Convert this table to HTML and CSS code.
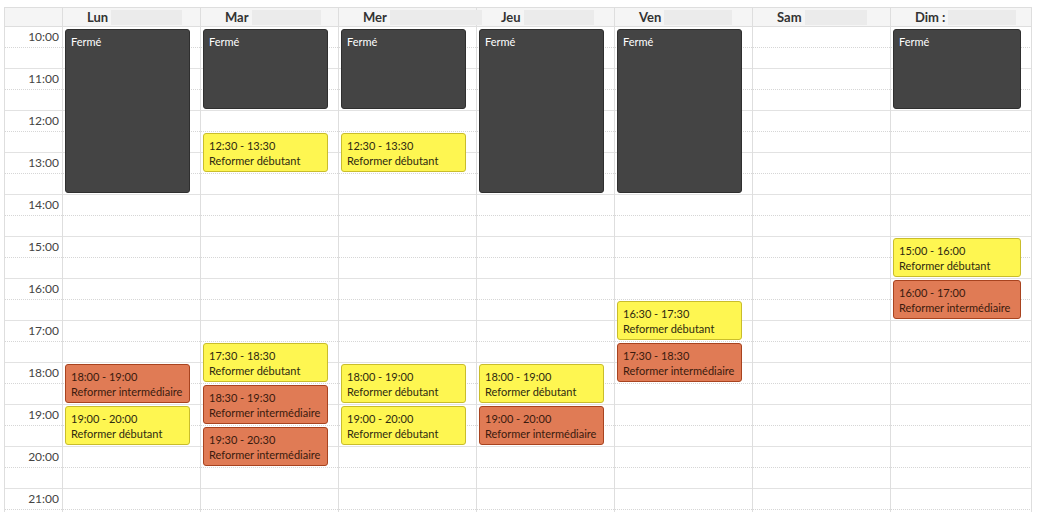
FILE: index.html
```html
<!DOCTYPE html>
<html lang="fr">
<head>
<meta charset="utf-8">
<title>Planning</title>
<link rel="stylesheet" href="styles.css">
</head>
<body>
<div class="cal">
  <div class="head">
    <div class="hcell"></div>
    <div class="hcell"><span class="day">Lun</span><span class="redact w71"></span></div>
    <div class="hcell"><span class="day">Mar</span><span class="redact w69"></span></div>
    <div class="hcell"><span class="day">Mer</span><span class="redact w92"></span></div>
    <div class="hcell"><span class="day">Jeu</span><span class="redact w70"></span></div>
    <div class="hcell"><span class="day">Ven</span><span class="redact w68"></span></div>
    <div class="hcell"><span class="day">Sam</span><span class="redact w62"></span></div>
    <div class="hcell"><span class="day">Dim :</span><span class="redact w68"></span></div>
  </div>
  <div class="body">
    <div class="lines">
      <div class="slot"></div><div class="slot hour"></div>
      <div class="slot"></div><div class="slot hour"></div>
      <div class="slot"></div><div class="slot hour"></div>
      <div class="slot"></div><div class="slot hour"></div>
      <div class="slot"></div><div class="slot hour"></div>
      <div class="slot"></div><div class="slot hour"></div>
      <div class="slot"></div><div class="slot hour"></div>
      <div class="slot"></div><div class="slot hour"></div>
      <div class="slot"></div><div class="slot hour"></div>
      <div class="slot"></div><div class="slot hour"></div>
      <div class="slot"></div><div class="slot hour"></div>
      <div class="slot"></div><div class="slot hour"></div>
    </div>

    <div class="col times">
      <div class="tl">10:00</div><div class="tl">11:00</div><div class="tl">12:00</div>
      <div class="tl">13:00</div><div class="tl">14:00</div><div class="tl">15:00</div>
      <div class="tl">16:00</div><div class="tl">17:00</div><div class="tl">18:00</div>
      <div class="tl">19:00</div><div class="tl">20:00</div><div class="tl">21:00</div>
    </div>

    <div class="col d1">
      <div class="ev closed" style="top:2px;height:164px">Fermé</div>
      <div class="ev inter" style="top:337px;height:39px"><div>18:00 - 19:00</div><div>Reformer intermédiaire</div></div>
      <div class="ev deb" style="top:379px;height:39px"><div>19:00 - 20:00</div><div>Reformer débutant</div></div>
    </div>
    <div class="col d2">
      <div class="ev closed" style="top:2px;height:80px">Fermé</div>
      <div class="ev deb" style="top:106px;height:39px"><div>12:30 - 13:30</div><div>Reformer débutant</div></div>
      <div class="ev deb" style="top:316px;height:39px"><div>17:30 - 18:30</div><div>Reformer débutant</div></div>
      <div class="ev inter" style="top:358px;height:39px"><div>18:30 - 19:30</div><div>Reformer intermédiaire</div></div>
      <div class="ev inter" style="top:400px;height:39px"><div>19:30 - 20:30</div><div>Reformer intermédiaire</div></div>
    </div>
    <div class="col d3">
      <div class="ev closed" style="top:2px;height:80px">Fermé</div>
      <div class="ev deb" style="top:106px;height:39px"><div>12:30 - 13:30</div><div>Reformer débutant</div></div>
      <div class="ev deb" style="top:337px;height:39px"><div>18:00 - 19:00</div><div>Reformer débutant</div></div>
      <div class="ev deb" style="top:379px;height:39px"><div>19:00 - 20:00</div><div>Reformer débutant</div></div>
    </div>
    <div class="col d4">
      <div class="ev closed" style="top:2px;height:164px">Fermé</div>
      <div class="ev deb" style="top:337px;height:39px"><div>18:00 - 19:00</div><div>Reformer débutant</div></div>
      <div class="ev inter" style="top:379px;height:39px"><div>19:00 - 20:00</div><div>Reformer intermédiaire</div></div>
    </div>
    <div class="col d5">
      <div class="ev closed" style="top:2px;height:164px">Fermé</div>
      <div class="ev deb" style="top:274px;height:39px"><div>16:30 - 17:30</div><div>Reformer débutant</div></div>
      <div class="ev inter" style="top:316px;height:39px"><div>17:30 - 18:30</div><div>Reformer intermédiaire</div></div>
    </div>
    <div class="col d6"></div>
    <div class="col d7">
      <div class="ev closed" style="top:2px;height:80px">Fermé</div>
      <div class="ev deb" style="top:211px;height:39px"><div>15:00 - 16:00</div><div>Reformer débutant</div></div>
      <div class="ev inter" style="top:253px;height:39px"><div>16:00 - 17:00</div><div>Reformer intermédiaire</div></div>
    </div>
  </div>
</div>
</body>
</html>
```
FILE: styles.css
```css
html, body {
  margin: 0;
  padding: 0;
  overflow: hidden;
  background: #ffffff;
}
body {
  font-family: "Lato", "Open Sans", sans-serif;
  color: #333;
}
.cal {
  margin: 7px 0 0 4px;
  width: 1028px;
}
.head,
.body {
  display: grid;
  grid-template-columns: 58px repeat(6, 138px) 141px;
  border-left: 1px solid #dedede;
}
.head {
  border-top: 1px solid #dedede;
  border-bottom: 1px solid #dedede;
  background: #f5f5f5;
  height: 20px;
  box-sizing: border-box;
}
.hcell {
  border-right: 1px solid #dedede;
  display: flex;
  align-items: center;
  padding-left: 24px;
  gap: 3px;
  min-width: 0;
  white-space: nowrap;
}
.hcell:first-child { padding-left: 0; }
.day {
  font-weight: bold;
  font-size: 13px;
  color: #333;
  line-height: 18px;
}
.redact {
  display: inline-block;
  height: 15px;
  background: #ebebeb;
  flex: none;
  position: relative;
  z-index: 1;
}
.w62 { width: 62px; }
.w68 { width: 68px; }
.w69 { width: 69px; }
.w70 { width: 70px; }
.w71 { width: 71px; }
.w92 { width: 92px; }

.body {
  grid-template-rows: 504px;
}
.lines {
  grid-row: 1;
  grid-column: 1 / -1;
}
.slot {
  height: 21px;
  box-sizing: border-box;
  border-bottom: 1px dotted #d6d6d6;
}
.slot.hour {
  border-bottom: 1px solid #e2e2e2;
}
.col {
  grid-row: 1;
  border-right: 1px solid #dedede;
  position: relative;
  box-sizing: border-box;
}
.times { grid-column: 1; }
.d1 { grid-column: 2; }
.d2 { grid-column: 3; }
.d3 { grid-column: 4; }
.d4 { grid-column: 5; }
.d5 { grid-column: 6; }
.d6 { grid-column: 7; }
.d7 { grid-column: 8; }

.tl {
  height: 42px;
  line-height: 20px;
  font-size: 12px;
  text-align: right;
  padding-right: 3px;
  color: #444;
  box-sizing: border-box;
}

.ev {
  position: absolute;
  left: 2px;
  right: 7%;
  box-sizing: border-box;
  border: 1px solid;
  border-radius: 3px;
  padding: 4px 5px 0;
  font-size: 11px;
  line-height: 15px;
  overflow: hidden;
  white-space: nowrap;
}
.closed {
  background: #444444;
  border-color: #2f2f2f;
  color: #ffffff;
}
.deb {
  background: #fef651;
  border-color: #c9bd2b;
  color: #2e2a10;
}
.inter {
  background: #e07b55;
  border-color: #a8431f;
  color: #3a1a0e;
}
```
